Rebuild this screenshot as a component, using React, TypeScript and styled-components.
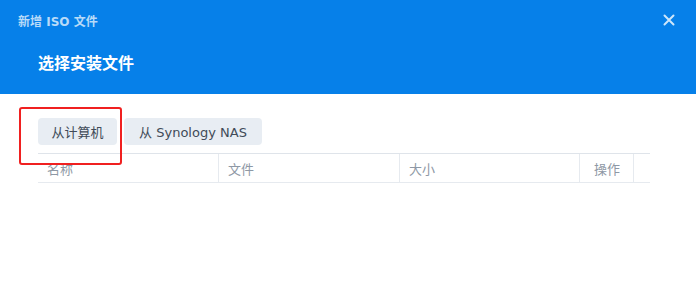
import React from "react";
import styled, { createGlobalStyle } from "styled-components";

const Global = createGlobalStyle`
  html, body { margin: 0; padding: 0; background: #ffffff; }
  body { font-family: "DejaVu Sans", "Noto Sans CJK SC", sans-serif; width: 696px; height: 295px; overflow: hidden; }
`;

const Dialog = styled.div`
  width: 696px;
  height: 295px;
  display: flex;
  flex-direction: column;
  background: #fff;
  position: relative;
`;

const Header = styled.div`
  height: 94px;
  background: #0680e9;
  box-sizing: border-box;
  padding: 11px 18px 0 18px;
  display: flex;
  flex-direction: column;
`;

const TopRow = styled.div`
  display: flex;
  align-items: center;
  justify-content: space-between;
  height: 18px;
`;

const Title = styled.div`
  font-family: "DejaVu Sans", "Noto Sans CJK SC", sans-serif;
  font-weight: bold;
  font-size: 12px;
  color: rgba(255, 255, 255, 0.72);
`;

const Close = styled.div`
  width: 14px;
  height: 14px;
  margin-right: 2px;
  display: flex;
  align-items: center;
  justify-content: center;
`;

const Subtitle = styled.div`
  margin: 23px 0 0 20px;
  font-family: "Noto Sans CJK SC", sans-serif;
  font-weight: bold;
  font-size: 16px;
  color: #ffffff;
  line-height: 20px;
`;

const Body = styled.div`
  padding: 24px 46px 0 38px;
  display: flex;
  flex-direction: column;
`;

const Buttons = styled.div`
  display: flex;
  gap: 7px;
`;

const Btn = styled.div<{ $w: number }>`
  width: ${(p) => p.$w}px;
  height: 27px;
  box-sizing: border-box;
  background: #e8edf3;
  border-radius: 4px;
  display: flex;
  align-items: center;
  justify-content: center;
  font-size: 13px;
  color: #414b58;
  font-family: "DejaVu Sans", "Noto Sans CJK SC", sans-serif;
`;

const Table = styled.div`
  margin-top: 8px;
  display: flex;
  height: 30px;
  box-sizing: border-box;
  border-top: 1px solid #dfe4ea;
  border-bottom: 1px solid #e6eaef;
`;

const Col = styled.div<{ $w: number; $last?: boolean }>`
  width: ${(p) => p.$w}px;
  box-sizing: border-box;
  border-right: ${(p) => (p.$last ? "none" : "1px solid #e6eaef")};
  padding-left: ${(p) => (p.$w < 60 ? 14 : 9)}px;
  display: flex;
  align-items: center;
  font-family: "Noto Sans CJK SC", sans-serif;
  font-size: 13px;
  color: #8e98a5;
  padding-top: 1px;
`;

const Annotation = styled.div`
  position: absolute;
  left: 19px;
  top: 107px;
  width: 103px;
  height: 58px;
  box-sizing: border-box;
  border: 2.5px solid #f02020;
  border-radius: 3px;
  pointer-events: none;
`;

export default function App() {
  return (
    <>
      <Global />
      <Dialog>
        <Header>
          <TopRow>
            <Title>新增 ISO 文件</Title>
            <Close>
              <svg width="12" height="12" viewBox="0 0 12 12">
                <path d="M1.5 1.5 L10.5 10.5 M10.5 1.5 L1.5 10.5" stroke="rgba(255,255,255,0.8)" strokeWidth="2" strokeLinecap="round" />
              </svg>
            </Close>
          </TopRow>
          <Subtitle>选择安装文件</Subtitle>
        </Header>
        <Body>
          <Buttons>
            <Btn $w={79}>从计算机</Btn>
            <Btn $w={138}>从 Synology NAS</Btn>
          </Buttons>
          <Table>
            <Col $w={181}>名称</Col>
            <Col $w={181}>文件</Col>
            <Col $w={180}>大小</Col>
            <Col $w={54}>操作</Col>
            <Col $w={16} $last />
          </Table>
        </Body>
        <Annotation />
      </Dialog>
    </>
  );
}
